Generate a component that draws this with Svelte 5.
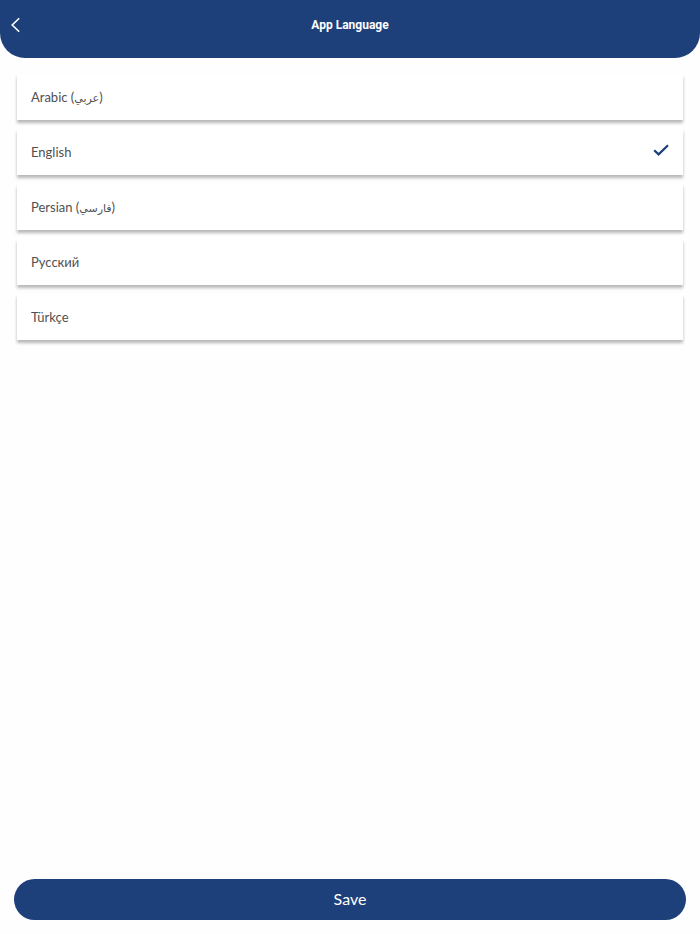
<script>
  const languages = [
    { code: "ar", name: "Arabic", native: "عربي" },
    { code: "en", name: "English" },
    { code: "fa", name: "Persian", native: "فارسي" },
    { code: "ru", name: "Русский" },
    { code: "tr", name: "Türkçe" },
  ];

  let selected = $state("en");
  let saved = $state("en");

  function save(event) {
    event.preventDefault();
    saved = selected;
  }

  function back() {
    selected = saved;
    history.back();
  }
</script>

<div class="screen">
  <header>
    <button type="button" class="back" aria-label="Back" onclick={back}>
      <svg viewBox="0 0 10 16" width="10" height="16" aria-hidden="true">
        <path d="M8.2 1.2 1.2 8l7 6.8" />
      </svg>
    </button>
    <h1>App Language</h1>
  </header>

  <form onsubmit={save}>
    <div class="languages" role="radiogroup" aria-label="App Language">
      {#each languages as language (language.code)}
        <label class="language">
          <input type="radio" name="language" value={language.code} bind:group={selected} />
          <span class="name">
            {language.name}
            {#if language.native}
              (<bdi lang={language.code}>{language.native}</bdi>)
            {/if}
          </span>
          {#if selected === language.code}
            <svg class="check" viewBox="0 0 16 12" width="16" height="12" aria-hidden="true">
              <path d="M1.2 6.2 5.6 10.4 15 1.2" />
            </svg>
          {/if}
        </label>
      {/each}
    </div>

    <button type="submit" class="save">Save</button>
  </form>
</div>

<style>
  :global(body) {
    background: #fefefe;
  }

  .screen {
    min-height: 100vh;
    display: flex;
    flex-direction: column;
    font-family: Lato, "Open Sans", "DejaVu Sans", sans-serif;
  }

  header {
    display: grid;
    grid-template-columns: 32px 1fr 32px;
    align-items: center;
    padding: 9px 0 17px;
    background: #1e407a;
    border-radius: 0 0 25px 25px;
    color: #fff;
  }

  h1 {
    margin: 0;
    font-family: Roboto, sans-serif;
    font-size: 12px;
    line-height: 16px;
    font-weight: 700;
    text-align: center;
  }

  button {
    border: 0;
    font: inherit;
    color: inherit;
    cursor: pointer;
  }

  .back {
    height: 32px;
    padding: 0 0 0 11px;
    display: flex;
    align-items: center;
    background: none;
  }

  path {
    fill: none;
    stroke: currentColor;
    stroke-width: 1.6;
  }

  form {
    flex: 1;
    display: flex;
    flex-direction: column;
    justify-content: space-between;
    gap: 24px;
    padding: 16px 14px 14px;
  }

  .languages {
    display: flex;
    flex-direction: column;
    gap: 9px;
    padding: 0 3px;
  }

  .language {
    position: relative;
    display: flex;
    align-items: center;
    justify-content: space-between;
    height: 46px;
    padding: 0 14px;
    background: #fff;
    box-shadow: 0 3px 3px rgba(0, 0, 0, 0.28);
    color: #505050;
    font-size: 13px;
    line-height: 20px;
    cursor: pointer;
  }

  .language input {
    position: absolute;
    opacity: 0;
    margin: 0;
  }

  bdi {
    font-size: 11px;
  }

  .check {
    margin-bottom: 4px;
    color: #1e407a;
  }

  .check path {
    stroke-width: 2.2;
  }

  .save {
    padding: 9px 10px 11px;
    border-radius: 21px;
    background: #1e407a;
    color: #fff;
    font-size: 16px;
    line-height: 21px;
  }
</style>
